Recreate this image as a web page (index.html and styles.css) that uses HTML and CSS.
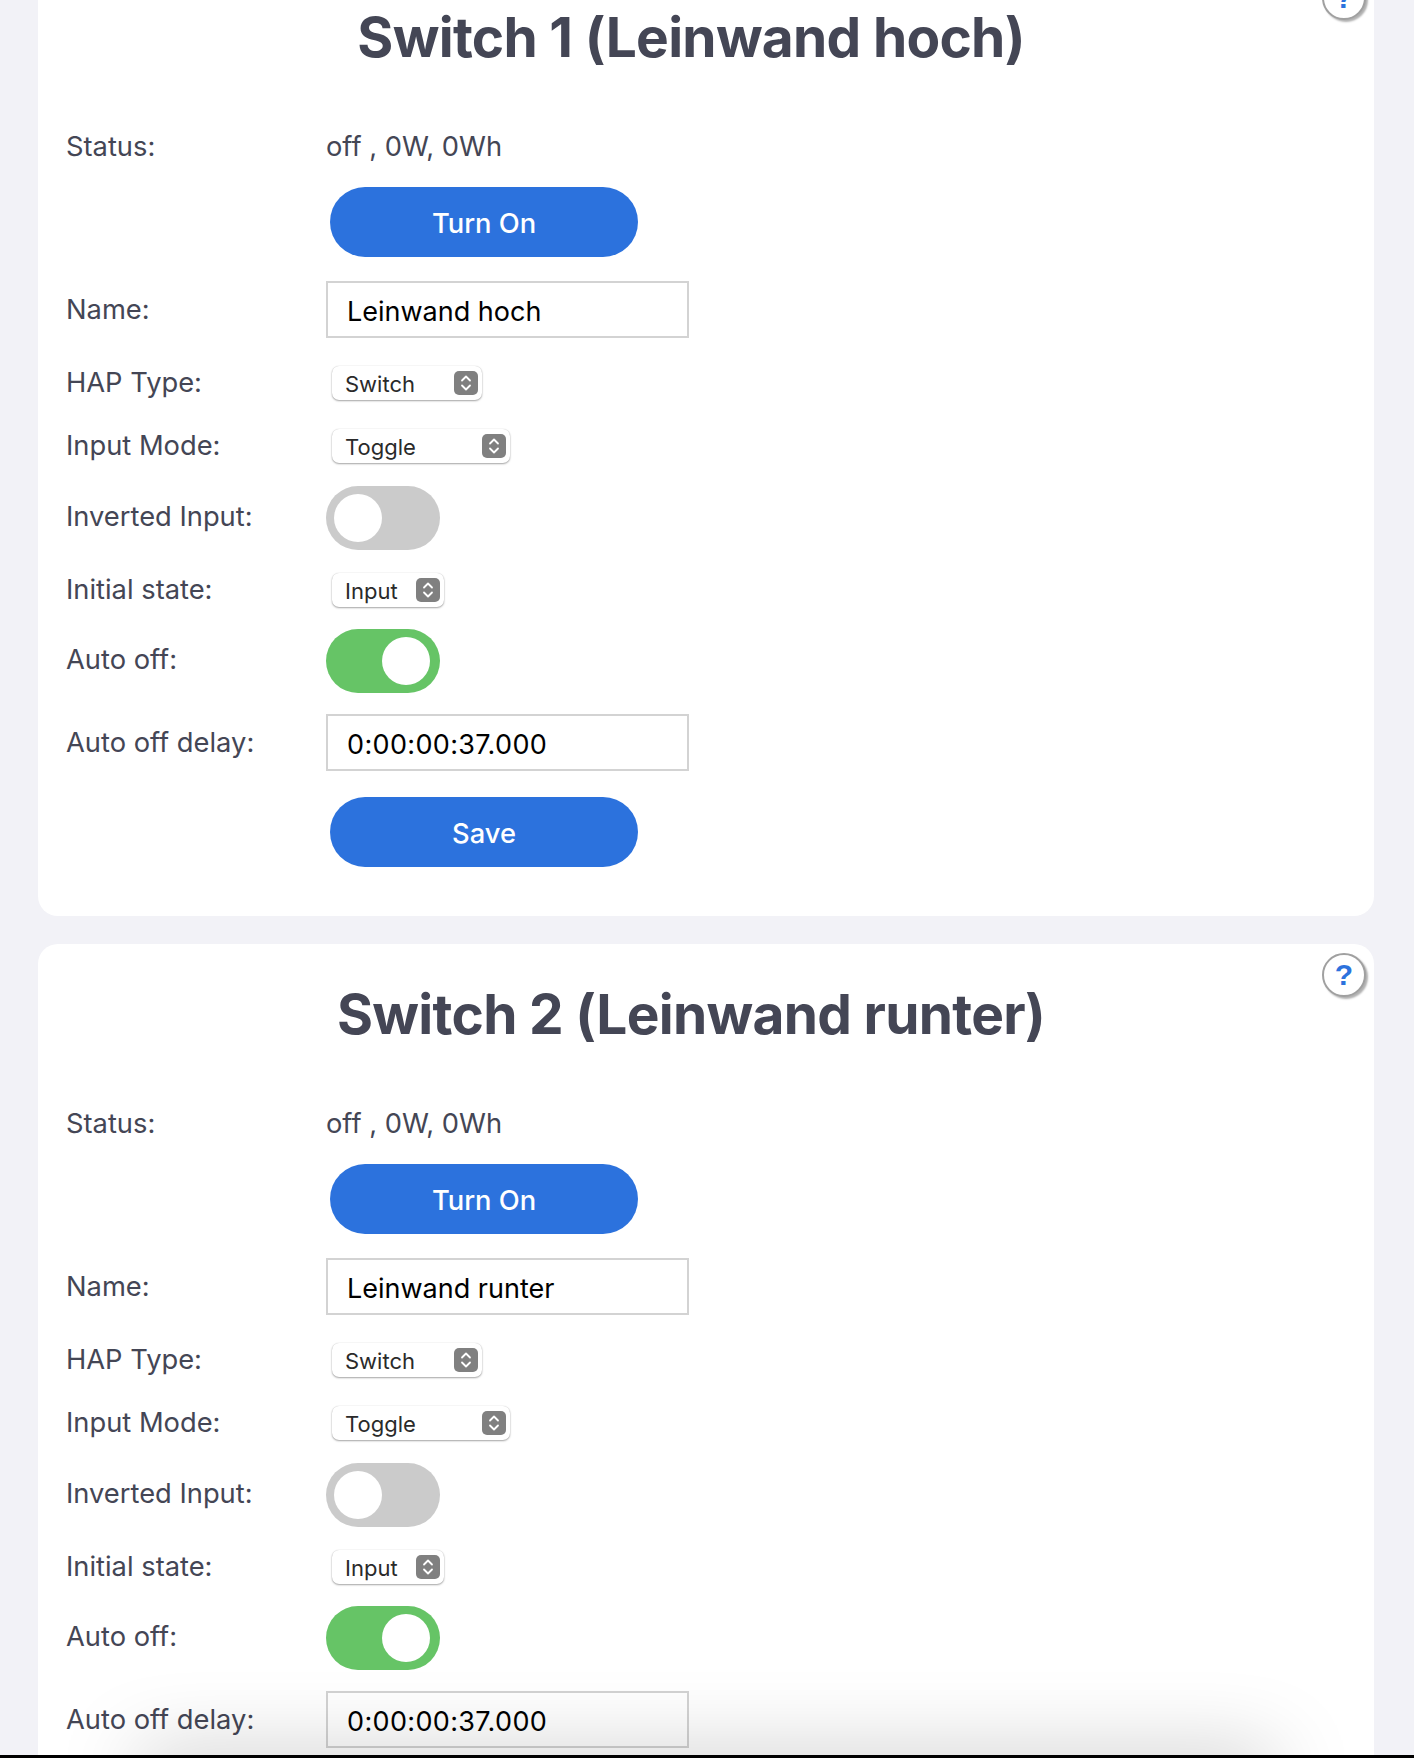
FILE: index.html
```html
<!DOCTYPE html>
<html lang="de">
<head>
  <meta charset="UTF-8" />
  <meta name="viewport" content="width=device-width, initial-scale=1.0" />
  <title>Switch settings</title>
  <link rel="stylesheet" href="styles.css">
</head>
<body>
  <div class="page">
    <div class="card">
      <button class="help">?</button>
      <h1>Switch 1 (Leinwand hoch)</h1>
      <div class="row status-row"><span class="label">Status:</span><span class="value">off , 0W, 0Wh</span></div>
      <div class="row"><span class="label"></span><button class="action">Turn On</button></div>
      <div class="row"><span class="label">Name:</span><div class="text-input">Leinwand hoch</div></div>
      <div class="row select-row"><span class="label">HAP Type:</span>
        <div class="select select-type"><span class="select-text">Switch</span>
          <svg viewBox="0 0 24 24"><rect width="24" height="24" rx="5" /><path d="M8 9.5 12 5.5 16 9.5M8 14.5 12 18.5 16 14.5" /></svg>
        </div>
      </div>
      <div class="row select-row mode-row"><span class="label">Input Mode:</span>
        <div class="select select-mode"><span class="select-text">Toggle</span>
          <svg viewBox="0 0 24 24"><rect width="24" height="24" rx="5" /><path d="M8 9.5 12 5.5 16 9.5M8 14.5 12 18.5 16 14.5" /></svg>
        </div>
      </div>
      <div class="row toggle-row"><span class="label">Inverted Input:</span><div class="toggle"><span class="knob"></span></div></div>
      <div class="row select-row state-row"><span class="label">Initial state:</span>
        <div class="select select-state"><span class="select-text">Input</span>
          <svg viewBox="0 0 24 24"><rect width="24" height="24" rx="5" /><path d="M8 9.5 12 5.5 16 9.5M8 14.5 12 18.5 16 14.5" /></svg>
        </div>
      </div>
      <div class="row toggle-row"><span class="label">Auto off:</span><div class="toggle on"><span class="knob"></span></div></div>
      <div class="row delay-row"><span class="label">Auto off delay:</span><div class="text-input time">0:00:00:37.000</div></div>
      <div class="row"><span class="label"></span><button class="action">Save</button></div>
    </div>

    <div class="card">
      <button class="help">?</button>
      <h1>Switch 2 (Leinwand runter)</h1>
      <div class="row status-row"><span class="label">Status:</span><span class="value">off , 0W, 0Wh</span></div>
      <div class="row"><span class="label"></span><button class="action">Turn On</button></div>
      <div class="row"><span class="label">Name:</span><div class="text-input">Leinwand runter</div></div>
      <div class="row select-row"><span class="label">HAP Type:</span>
        <div class="select select-type"><span class="select-text">Switch</span>
          <svg viewBox="0 0 24 24"><rect width="24" height="24" rx="5" /><path d="M8 9.5 12 5.5 16 9.5M8 14.5 12 18.5 16 14.5" /></svg>
        </div>
      </div>
      <div class="row select-row mode-row"><span class="label">Input Mode:</span>
        <div class="select select-mode"><span class="select-text">Toggle</span>
          <svg viewBox="0 0 24 24"><rect width="24" height="24" rx="5" /><path d="M8 9.5 12 5.5 16 9.5M8 14.5 12 18.5 16 14.5" /></svg>
        </div>
      </div>
      <div class="row toggle-row"><span class="label">Inverted Input:</span><div class="toggle"><span class="knob"></span></div></div>
      <div class="row select-row state-row"><span class="label">Initial state:</span>
        <div class="select select-state"><span class="select-text">Input</span>
          <svg viewBox="0 0 24 24"><rect width="24" height="24" rx="5" /><path d="M8 9.5 12 5.5 16 9.5M8 14.5 12 18.5 16 14.5" /></svg>
        </div>
      </div>
      <div class="row toggle-row"><span class="label">Auto off:</span><div class="toggle on"><span class="knob"></span></div></div>
      <div class="row delay-row"><span class="label">Auto off delay:</span><div class="text-input time">0:00:00:37.000</div></div>
    </div>
  </div>

  <div class="screen-shade"></div>
  <div class="screen-edge"></div>
</body>
</html>
```
FILE: styles.css
```css
:root {
  --text-color: #444655;
  --blue: #2c72dd;
  --green: #66c466;
  --grey: #cbcbcb;
  --background: #f2f2f7;
}

body {
  margin: 0;
  height: 100vh;
  overflow: hidden;
  position: relative;
  background-color: var(--background);
  color: var(--text-color);
  font-family: Inter, 'Noto Sans', sans-serif;
}

.page {
  margin-top: -33px;
  padding: 0 40px 0 38px;
}

.card {
  position: relative;
  background-color: #ffffff;
  border-radius: 20px;
  padding: 38px 58px 49px 28px;
  margin-bottom: 28px;
}

.card h1 {
  margin: 0 0 61px;
  font-size: 55px;
  line-height: 64px;
  font-weight: 700;
  letter-spacing: -0.7px;
  text-align: center;
}

.help {
  position: absolute;
  top: 9px;
  right: 8px;
  width: 44px;
  height: 44px;
  padding: 0;
  border: 2px solid #a0a0a0;
  border-radius: 50%;
  background-color: #ffffff;
  box-shadow: 2px 2px 2px #b0b0b0;
  color: var(--blue);
  font-family: 'Liberation Sans', sans-serif;
  font-size: 30px;
  font-weight: 700;
}

.row {
  display: flex;
  align-items: center;
  margin-bottom: 24px;
}

.row:last-child {
  margin-bottom: 0;
}

.select-row {
  align-items: flex-end;
}

.status-row {
  margin-bottom: 23px;
}

.mode-row {
  margin-bottom: 23px;
}

.toggle-row {
  margin-bottom: 21px;
}

.toggle-row .label {
  margin-bottom: 2px;
}

.state-row {
  margin-bottom: 22px;
}

.delay-row {
  margin-bottom: 26px;
}

.label {
  width: 260px;
  flex-shrink: 0;
  font-size: 27.3px;
  line-height: 34px;
}

.value {
  font-size: 27.3px;
  line-height: 34px;
}

.action {
  width: 308px;
  height: 70px;
  margin-left: 4px;
  padding: 2px 0 0;
  border: none;
  border-radius: 35px;
  background-color: var(--blue);
  color: #ffffff;
  font-family: Inter, sans-serif;
  font-size: 27.3px;
  font-weight: 500;
}

.text-input {
  width: 363px;
  height: 57px;
  box-sizing: border-box;
  padding-left: 19px;
  border: 2px solid #d3d3d3;
  color: #000000;
  font-size: 27px;
  line-height: 58px;
}

.text-input.time {
  letter-spacing: 0.35px;
}

.select {
  display: flex;
  align-items: center;
  justify-content: space-between;
  box-sizing: border-box;
  height: 34px;
  margin: 4px 0 0 6px;
  padding: 0 4px 0 13px;
  border-radius: 7px;
  background-color: #ffffff;
  box-shadow: 0 1px 2px rgba(0, 0, 0, 0.35), 0 0 1px rgba(0, 0, 0, 0.2);
  color: #2a2a2a;
  font-size: 22px;
}

.select-text {
  margin-top: 2px;
}

.select-type { width: 150px; }
.select-mode { width: 178px; margin-top: 5px; }
.select-state { width: 112px; margin-top: 2px; }

.select svg {
  width: 24px;
  height: 24px;
}

.select svg rect {
  fill: #808080;
}

.select svg path {
  fill: none;
  stroke: #ffffff;
  stroke-width: 1.8;
  stroke-linecap: round;
  stroke-linejoin: round;
}

.toggle {
  display: flex;
  align-items: center;
  width: 114px;
  height: 64px;
  border-radius: 32px;
  background-color: var(--grey);
}

.toggle .knob {
  width: 48px;
  height: 48px;
  margin-left: 8px;
  border-radius: 50%;
  background-color: #ffffff;
}

.toggle.on {
  background-color: var(--green);
}

.toggle.on .knob {
  margin-left: 56px;
}

/* dark strip and soft shadow along the bottom edge of the photo */
.screen-shade {
  position: absolute;
  left: 38px;
  right: 40px;
  bottom: 3px;
  height: 90px;
  overflow: hidden;
  pointer-events: none;
}

.screen-shade::after {
  content: '';
  position: absolute;
  left: 100px;
  right: 100px;
  top: 100%;
  height: 40px;
  box-shadow: 0 0 80px rgba(0, 0, 0, 0.26);
}

.screen-edge {
  position: absolute;
  left: 0;
  right: 0;
  bottom: 0;
  height: 3px;
  background-color: #000000;
}
```
